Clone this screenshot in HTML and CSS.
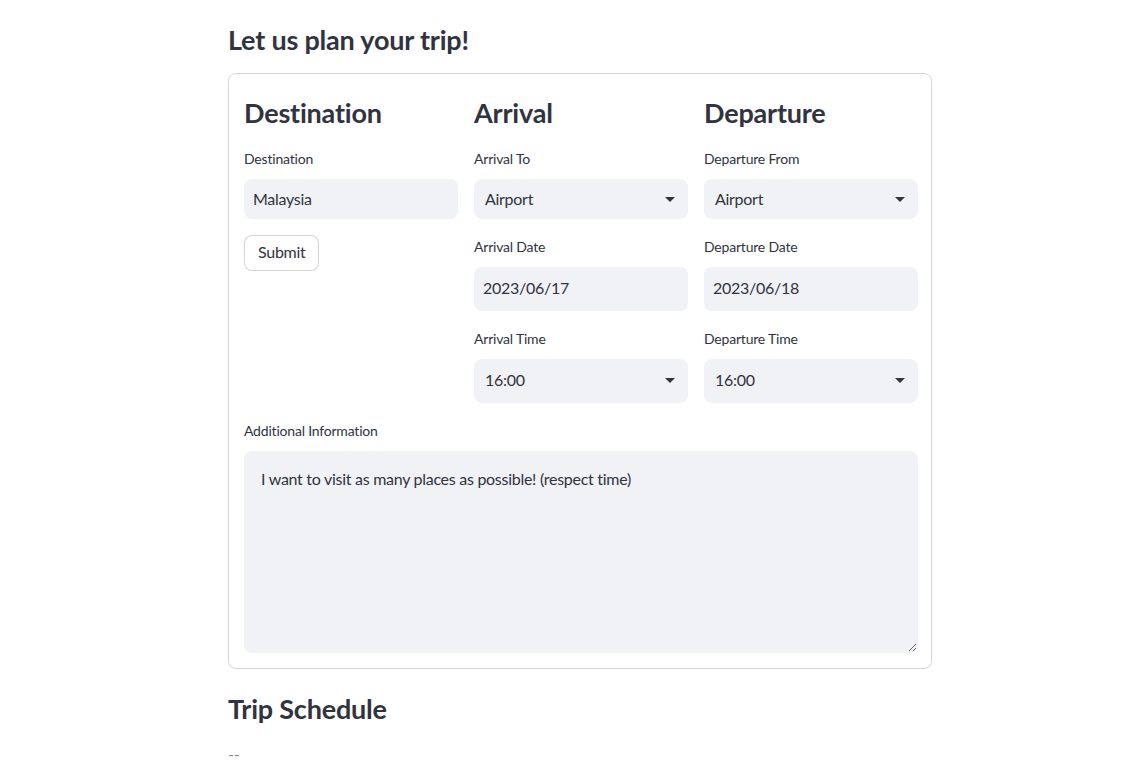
FILE: index.html
```html
<!DOCTYPE html>
<html lang="en">
<head>
<meta charset="utf-8">
<title>Let us plan your trip!</title>
<link rel="stylesheet" href="styles.css">
</head>
<body>
<main class="page">
  <h1 class="title">Let us plan your trip!</h1>
  <form class="form-box">
    <div class="columns">
      <div class="col">
        <h2 class="col-heading">Destination</h2>
        <div class="field">
          <label class="label">Destination</label>
          <div class="input">Malaysia</div>
        </div>
        <div class="field">
          <button type="button" class="button">Submit</button>
        </div>
      </div>
      <div class="col">
        <h2 class="col-heading">Arrival</h2>
        <div class="field">
          <label class="label">Arrival To</label>
          <div class="select"><span>Airport</span><svg class="caret" width="10" height="5" viewBox="0 0 10 5"><path d="M0 0h10L5 5z" fill="#31333f"/></svg></div>
        </div>
        <div class="field">
          <label class="label">Arrival Date</label>
          <div class="input tall">2023/06/17</div>
        </div>
        <div class="field">
          <label class="label">Arrival Time</label>
          <div class="select tall"><span>16:00</span><svg class="caret" width="10" height="5" viewBox="0 0 10 5"><path d="M0 0h10L5 5z" fill="#31333f"/></svg></div>
        </div>
      </div>
      <div class="col">
        <h2 class="col-heading">Departure</h2>
        <div class="field">
          <label class="label">Departure From</label>
          <div class="select"><span>Airport</span><svg class="caret" width="10" height="5" viewBox="0 0 10 5"><path d="M0 0h10L5 5z" fill="#31333f"/></svg></div>
        </div>
        <div class="field">
          <label class="label">Departure Date</label>
          <div class="input tall">2023/06/18</div>
        </div>
        <div class="field">
          <label class="label">Departure Time</label>
          <div class="select tall"><span>16:00</span><svg class="caret" width="10" height="5" viewBox="0 0 10 5"><path d="M0 0h10L5 5z" fill="#31333f"/></svg></div>
        </div>
      </div>
    </div>
    <div class="field">
      <label class="label">Additional Information</label>
      <textarea class="textarea" readonly>I want to visit as many places as possible! (respect time)</textarea>
    </div>
  </form>
  <h1 class="title schedule">Trip Schedule</h1>
  <p class="muted">--</p>
</main>
</body>
</html>
```

FILE: styles.css
```css
* { box-sizing: border-box; }
html, body { margin: 0; padding: 0; background: #ffffff; }
body {
  font-family: "Source Sans Pro", Lato, "Liberation Sans", sans-serif;
  color: #31333f;
  font-size: 16px;
  letter-spacing: -0.28px;
}
.page {
  width: 704px;
  margin-left: 228px;
  padding-top: 23px;
}
.title {
  margin: 0;
  font-size: 27px;
  line-height: 34px;
  font-weight: 700;
  letter-spacing: -0.2px;
  color: #31333f;
}
.form-box {
  margin-top: 16px;
  border: 1px solid rgba(49, 51, 63, 0.2);
  border-radius: 8px;
  padding: 15px 13px 15px 15px;
  display: flex;
  flex-direction: column;
  gap: 16px;
}
.columns {
  display: grid;
  grid-template-columns: repeat(3, 1fr);
  gap: 16px;
}
.col {
  display: flex;
  flex-direction: column;
  gap: 16px;
}
.col-heading {
  margin: 0;
  padding: 7px 0 1px;
  font-size: 27px;
  line-height: 34px;
  font-weight: 700;
  letter-spacing: -0.2px;
}
.field {
  display: flex;
  flex-direction: column;
  align-items: stretch;
}
.label {
  display: block;
  font-size: 14px;
  line-height: 24px;
  height: 24px;
  margin-bottom: 8px;
  letter-spacing: -0.2px;
}
.input, .select {
  height: 40px;
  background: #f0f2f6;
  border-radius: 8px;
  display: flex;
  align-items: center;
  font-size: 16px;
  padding-bottom: 2px;
}
.input { padding-left: 9px; }
.select {
  padding-left: 11px;
  padding-right: 13px;
  justify-content: space-between;
}
.select .caret { margin-top: 2px; }
.tall { height: 44px; padding-bottom: 3px; }
.caret { display: block; }
.button {
  align-self: flex-start;
  height: 36px;
  padding: 0 13px 3px;
  background: #ffffff;
  border: 1px solid rgba(49, 51, 63, 0.2);
  border-radius: 8px;
  font-family: inherit;
  font-size: 16px;
  letter-spacing: -0.28px;
  color: #31333f;
}
.textarea {
  display: block;
  width: 100%;
  height: 202px;
  background: #f0f2f6;
  border: 1px solid #f0f2f6;
  border-radius: 8px;
  padding: 14px 16px 16px;
  font-family: inherit;
  font-size: 16px;
  letter-spacing: -0.28px;
  line-height: 25.6px;
  color: #31333f;
  resize: vertical;
  outline: none;
}
.schedule { margin-top: 23px; }
.muted {
  margin: 15px 0 0;
  font-size: 16px;
  line-height: 26px;
  color: rgba(49, 51, 63, 0.6);
}
```
